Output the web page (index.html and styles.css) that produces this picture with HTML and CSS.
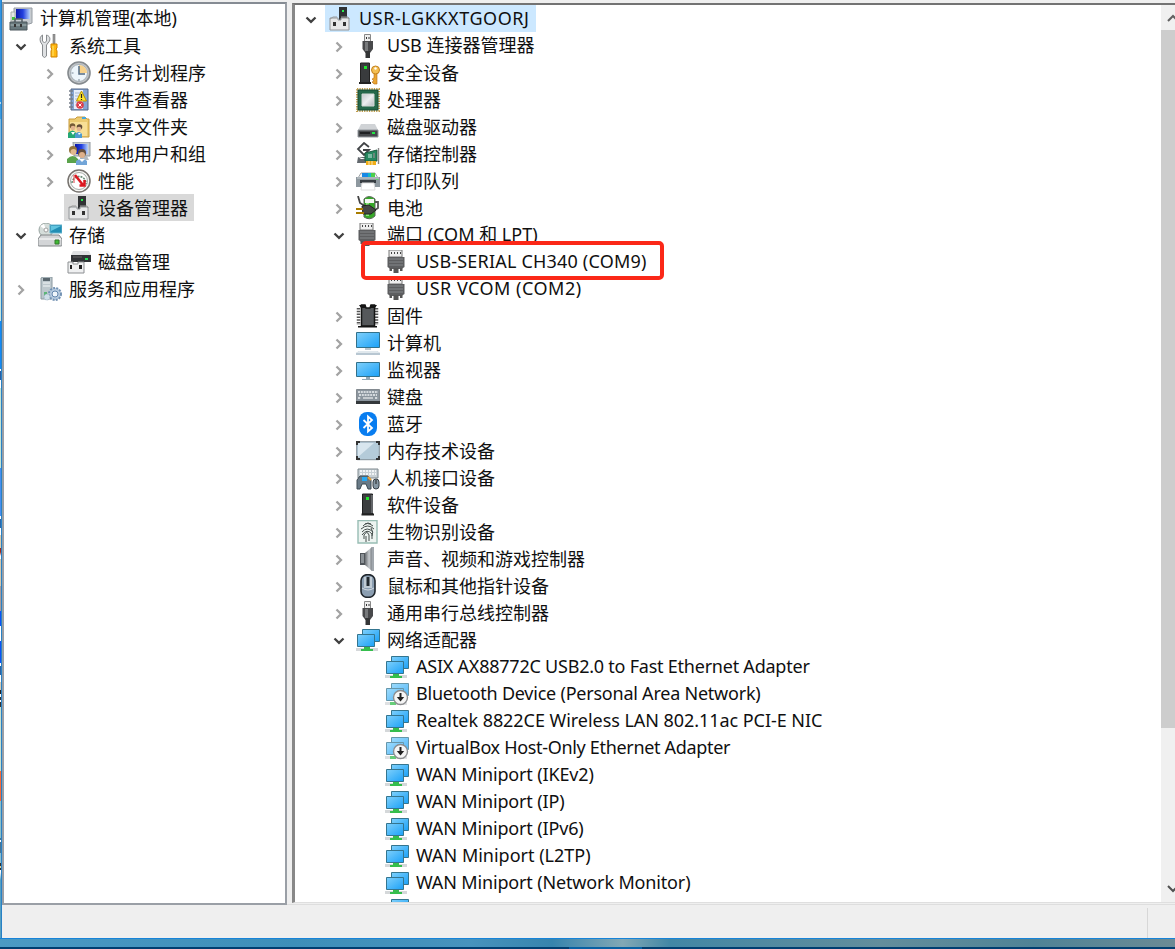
FILE: index.html
```
<!DOCTYPE html>
<html lang="zh-CN">
<head>
    <meta charset="UTF-8">
    <meta name="viewport" content="width=device-width, initial-scale=1.0">
    <title>计算机管理</title>
    <link rel="stylesheet" href="styles.css">
</head>
<body>
    <svg class="sprites" width="0" height="0">
        <defs>
            <linearGradient id="screen" x1="0" y1="0" x2="1" y2="1"><stop offset="0" stop-color="#7fd0fb"/><stop offset="1" stop-color="#1ba1f8"/></linearGradient>
            <linearGradient id="navy" x1="0" y1="0" x2="1" y2="0"><stop offset="0" stop-color="#0a17a8"/><stop offset=".5" stop-color="#2340e0"/><stop offset="1" stop-color="#b8d4fa"/></linearGradient>
            <linearGradient id="metal" x1="0" y1="0" x2="1" y2="1"><stop offset="0" stop-color="#c3c8cb"/><stop offset=".5" stop-color="#eceeef"/><stop offset="1" stop-color="#b2b9bd"/></linearGradient>
            <linearGradient id="steel" x1="0" y1="0" x2="1" y2="0"><stop offset="0" stop-color="#686c70"/><stop offset=".6" stop-color="#c8ccd0"/><stop offset="1" stop-color="#70757a"/></linearGradient>
        </defs>
        <symbol id="management" viewBox="0 0 24 24">
            <path d="M5 1h18v15l-3 1H5z" fill="#c6cbd0" stroke="#969ca3"/><path d="M7 2h14v10H7z" fill="url(#navy)"/>
            <path d="M2 5h4v9H2z" fill="#e4e8e5" stroke="#a7b0aa"/><path d="M3 10h3v3H3z" fill="#3cc63c"/>
            <path d="M6 15v-3h7v3" fill="none" stroke="#59636a" stroke-width="1.6"/><path d="M1 15h17v8H1z" fill="#68787d" stroke="#4b575c"/><path d="M1.5 18h16" stroke="#a9b8bb"/><path d="M5 17h2v3H5zm6 0h2v3h-2z" fill="#333"/>
        </symbol>
        <symbol id="tools" viewBox="0 0 24 24">
            <path d="M4.500 1v6l2 2 2-2V1c3 1 4 3 3 6l-3 4v11q-2 3-4 0V11L2.500 8Q1 3 4.500 1z" fill="#dfe1e3" stroke="#888b8e"/>
            <path d="M15 0h2v10h-2z" fill="#999" stroke="#777" stroke-width=".6"/><path d="M13 10h6v4l-1 1 1 2v6h-6v-6l1-2-1-1z" fill="#ffb812" stroke="#d18300"/><path d="M15 12v10" stroke="#ffe66f"/>
        </symbol>
        <symbol id="clock" viewBox="0 0 24 24">
            <circle cx="12" cy="12" r="11" fill="#c1c4c7" stroke="#858a8e" stroke-width="1.6"/><circle cx="12" cy="12" r="8.5" fill="#edf5fb" stroke="#a6afb6"/><path d="M12 4a8 8 0 0 1 8 8h-8z" fill="#f7d18b"/><path d="M12 5v8h6" fill="none" stroke="#536b84" stroke-width="1.5"/><path d="M4.5 12h2m5.5 6v2" stroke="#788796"/>
        </symbol>
        <symbol id="events" viewBox="0 0 24 24">
            <path d="M4 1h17v21H4z" fill="#86a5d3" stroke="#536786"/><path d="M7 2h9v19H7z" fill="#e7eefb"/><path d="M8 5h6m-6 3h5m-5 3h5m-5 3h5m-5 3h5" stroke="#a8b8d1"/><path d="M2 3h4M2 7h4m-4 4h4m-4 4h4m-4 4h4" stroke="#777f8b" stroke-width="1.5"/>
            <path d="M14.5 3l5 10h-10z" fill="#ffe631" stroke="#bb9500"/><path d="M14.5 6v4m0 1v1" stroke="#222" stroke-width="1.2"/><circle cx="13" cy="17" r="3.8" fill="#dc3d48"/><path d="M11.5 15.5l3 3m0-3l-3 3" stroke="#fff"/>
        </symbol>
        <symbol id="shared" viewBox="0 0 24 24">
            <path d="M2 4h6l2-2h8l2 2h2v18H2z" fill="#eccb71" stroke="#c99b3c"/><path d="M3 7h17v14H3z" fill="#f8df96"/><path d="M15 2h4v2h-4z" fill="#47a6dd"/>
            <circle cx="5.5" cy="11" r="2.8" fill="#765b36"/><circle cx="12.5" cy="12" r="2.8" fill="#604b38"/><circle cx="6" cy="13" r="2.3" fill="#e3b590"/><circle cx="12" cy="14" r="2.3" fill="#e3b590"/><path d="M1 23v-5q5-5 8 0v5z" fill="#24a875"/><path d="M8 23v-4q4-4 7 0v4z" fill="#4f9bd0"/><path d="M4 17l2 3 2-3m3 1l1 2 2-2" fill="#fff"/>
        </symbol>
        <symbol id="users" viewBox="0 0 24 24">
            <path d="M6 0h17v14H7z" fill="#c6cbd0" stroke="#9299a0"/><path d="M8 2h13v10H8z" fill="url(#navy)"/><path d="M13 14h7l2 4h-9z" fill="#b4bac0"/>
            <circle cx="6" cy="8" r="4" fill="#92733c"/><circle cx="6.5" cy="10" r="3" fill="#e2b98d"/><circle cx="15" cy="11" r="4" fill="#68503c"/><circle cx="15" cy="13" r="3" fill="#dfb08a"/><path d="M0 21v-4q6-6 11 0v4z" fill="#5ba34b"/><path d="M9 23v-4q6-5 11 0v4z" fill="#72a5d8"/><path d="M12 17l3 3 3-3" fill="#fff"/>
        </symbol>
        <symbol id="performance" viewBox="0 0 24 24">
            <circle cx="12" cy="12" r="11" fill="#f7f7f4" stroke="#77736f" stroke-width="1.5"/><circle cx="12" cy="12" r="8.5" fill="#fff" stroke="#a5aaa7"/><path d="M5 14a7 7 0 1 1 14 1" fill="none" stroke="#688d76" stroke-width="1.6" stroke-dasharray="2 1"/><path d="M8 6l8 10m1.500-5v5.500h-5" fill="none" stroke="#dc1720" stroke-width="2.5"/><path d="M7 6v8" stroke="#e04448"/>
        </symbol>
        <symbol id="device" viewBox="0 0 24 24">
            <path d="M11 0h8v13h-8z" fill="#303234"/><path d="M14 3h2v2h-2z" fill="#2aec50"/><path d="M2 11h8v2h3v-2h8v12H2z" fill="#e7e8e9" stroke="#94979a"/><path d="M2 12l3-2h4m4 0h7l1 2" fill="none" stroke="#999"/><path d="M5 15h3v4H5zm10 0h3v4h-3z" fill="#333"/>
        </symbol>
        <symbol id="storage" viewBox="0 0 24 24">
            <circle cx="8" cy="7" r="7" fill="#d5ddda" stroke="#98a4a1"/><path d="M8 7L2 3l4-2z" fill="#fff"/><circle cx="8" cy="7" r="2" fill="#fff" stroke="#a0a0a0"/><path d="M12 2h12v8H12z" fill="#218eb4" stroke="#66b3cd"/><path d="M13 3h10l-10 5z" fill="#61c4df"/>
            <path d="M3 12h18l3 4v6q0 1-1 1H1q-1 0-1-1v-6z" fill="#d3d5d7" stroke="#828688"/><path d="M1 16h22" stroke="#fff"/><path d="M17 17h4v4h-4z" fill="#40bb35" stroke="#34782c"/>
        </symbol>
        <symbol id="disk" viewBox="0 0 24 24">
            <path d="M6 1h16l2 4H4z" fill="#dfe1e3"/><path d="M4 5h20v7H4z" fill="#303336"/><path d="M6 7h9" stroke="#666"/><path d="M18 8h3v2h-3z" fill="#20dc54"/><path d="M1 12h5v2h5v-2h6v11H1z" fill="#eff0f1" stroke="#8c8f92"/><path d="M3 15h2v4H3zm9 0h3v4h-3z" fill="#222"/>
        </symbol>
        <symbol id="services" viewBox="0 0 24 24">
            <path d="M3 1l2-1h9v22H3z" fill="#bdc8cd" stroke="#8a989f"/><path d="M5 1h7v3H5z" fill="#5b6870"/><path d="M5 6h7M5 9h7" stroke="#f3f7f8"/><path d="M6 15h3v5H6z" fill="#5bb676"/><circle cx="17" cy="17" r="6" fill="#b7cbe0" stroke="#7392b3" stroke-width="2" stroke-dasharray="2 1.2"/><circle cx="17" cy="17" r="3" fill="#eef5fb" stroke="#6386ad"/><circle cx="9" cy="20" r="3" fill="#cfdee8" stroke="#91aabd" stroke-dasharray="1 1"/>
        </symbol>
        <symbol id="usb" viewBox="0 0 24 24">
            <path d="M8.5.5h6v8h-6z" fill="#eee" stroke="#888"/><path d="M10 3h1v2h-1zm2.5 0h1v2h-1z" fill="#333"/><path d="M6.500 7h10.500v8l-3 4h-4.500l-3-4z" fill="#48494b"/><path d="M9 8h3v9H9z" fill="#77797b"/><path d="M9.5 17h4.500v7h-4.500z" fill="#343536"/>
        </symbol>
        <symbol id="software" viewBox="0 0 24 24"><path d="M6.5 1h10v20h-10z" fill="#3c3e40" stroke="#1e1f20"/><path d="M15 2h2v18h-2z" fill="#626568"/><path d="M10 4h3v3h-3z" fill="#20e52d"/><path d="M5.5 21.5h12.5" stroke="#222" stroke-width="2"/></symbol>
        <symbol id="security" viewBox="0 0 24 24"><path d="M4.5 2h9v20h-9z" fill="#393b3d" stroke="#222"/><path d="M8 5h3v3H8z" fill="#20e52d"/><path d="M3 22h12" stroke="#222" stroke-width="2"/><path d="M18 12h3v11h-3l-2-2 2-1-2-2 2-1z" fill="#e9a532" stroke="#b96d13" stroke-width=".6"/><circle cx="19.5" cy="9" r="4" fill="#f3bf52" stroke="#c38121"/><circle cx="19.5" cy="7.5" r="1.2" fill="#fff"/></symbol>
        <symbol id="processor" viewBox="0 0 24 24"><rect x="1" y="1" width="22" height="22" fill="none" stroke="#bf9d4e" stroke-width="2" stroke-dasharray="1.3 1.1"/><path d="M2 2h20v20H2z" fill="#25684a" stroke="#174b34"/><path d="M6 6h12v12H6z" fill="url(#metal)" stroke="#d4d9d5"/></symbol>
        <symbol id="drive" viewBox="0 0 24 24"><path d="M5 9h14l3 6H2z" fill="#d0d3d6"/><path d="M2 15h20v7H2z" fill="#44474a" stroke="#94999e"/><path d="M4 18h10" stroke="#1f2123" stroke-width="2"/><path d="M16 17h3v2h-3z" fill="#21e845"/></symbol>
        <symbol id="controller" viewBox="0 0 24 24"><path d="M13 5L8 1 2 7l6 6 5-5H7" fill="#fff" stroke="#414447" stroke-width="1.8"/><path d="M2 15h8v6H1zm0 0l3 2h6" fill="#62686d"/><path d="M9 11l12-3v11H9z" fill="#25875f" stroke="#1c5c40"/><path d="M12 12h4v4h-4z" fill="#78bba2"/><path d="M18 11v5M22.5 6v16" stroke="#888" stroke-width="1.4"/><path d="M10 19h10v4H10z" fill="#f0ad16"/><path d="M13 19v4m3-4v4" stroke="#fff" stroke-width=".7"/></symbol>
        <symbol id="printer" viewBox="0 0 24 24"><path d="M5 4h14l3 5H2z" fill="#f5f5f5" stroke="#9ba1a5"/><path d="M6 4h6v4H6z" fill="#1688e6"/><path d="M12 4h3v4h-3z" fill="#16b5c5"/><path d="M15 4h4v4h-4z" fill="#4dce4a"/><path d="M0 8h24v10H0z" fill="#8e989f"/><path d="M1 9h22" stroke="#c9d1d5"/><path d="M4 11h16v3H4z" fill="#373d42"/><path d="M6 14h12l1 7H5z" fill="#fff" stroke="#ddd"/><path d="M20 10h2v1h-2z" fill="#4fe55a"/></symbol>
        <symbol id="battery" viewBox="0 0 24 24"><path d="M18 6h4v6l-3 2" fill="none" stroke="#555" stroke-width="1.8"/><path d="M8 3q5-5 11 0v17q-5 5-11 1z" fill="#36a927" stroke="#5b665b"/><path d="M9 3h9v4H9z" fill="#f4f7f3"/><path d="M10 7h3v13h-3z" fill="#8be27b"/><path d="M2 0l2 7 5 3" fill="none" stroke="#444" stroke-width="1.8"/><path d="M6 10l7-1 7 5-5 4H7z" fill="#454744" stroke="#222"/><path d="M0 13h7M0 17h8" stroke="#a87c00" stroke-width="2"/></symbol>
        <symbol id="serial" viewBox="0 0 24 24"><path d="M4 0h13v7H4z" fill="#eee" stroke="#777"/><path d="M6 2h1v2H6zm3 0h1v2H9zm3 0h1v2h-1zm3 0h1v2h-1z" fill="#444"/><path d="M2.500 7h17v10l-3 2H5.500l-3-2z" fill="#5d5e60"/><path d="M4 9h14M4 12h14M4 15h14" stroke="#85878a"/><path d="M4.500 18h2.500v3H4.500zm10.500 0h2.500v3h-2.500zM8.500 18h5v5h-5z" fill="#555"/></symbol>
        <symbol id="firmware" viewBox="0 0 24 24"><path d="M2.500 4v17m18-17v17" stroke="#555" stroke-width="3.500" stroke-dasharray="1.500 1.300"/><path d="M5.500 1H9l1 3h4l1-3h3.500v21h-13z" fill="#55585b" stroke="#151515" stroke-width="1.500"/><path d="M3 1h6l1 3H5zm18 0h-6l-1 3h5zM2 22h19v1.500H2z" fill="#151515"/></symbol>
        <symbol id="computer" viewBox="0 0 24 24"><path d="M.5 1.5h23v15H.5z" fill="url(#screen)" stroke="#32718b"/><path d="M9 17h6v2H9z" fill="#b9c5ce"/><path d="M3 20h18l3 2v2H0v-2z" fill="#b8c7d2"/><path d="M3 20h18l3 2H0z" fill="#e0e8ed"/></symbol>
        <symbol id="monitor" viewBox="0 0 24 24"><path d="M.5 4.5h23v14H.5z" fill="url(#screen)" stroke="#32718b"/><path d="M10 19h4v2h4v1H6v-1h4z" fill="#91a8b7"/></symbol>
        <symbol id="keyboard" viewBox="0 0 24 24"><path d="M.5 4.5h23v13H.5z" fill="#8b959e" stroke="#838a90"/><path d="M2 7h20M3 10h18M2 13h3m14 0h3" stroke="#eef1f3" stroke-width="1.5" stroke-dasharray="2 .8"/><path d="M7 13h10" stroke="#fff"/><path d="M0 16h24v3H0z" fill="#34383b"/></symbol>
        <symbol id="bluetooth" viewBox="0 0 24 24"><rect x="3" width="18" height="24" rx="8" fill="#087df0"/><path d="M7.500 8l8.500 8-4 3.500v-15l4 3.500-8.500 8" fill="none" stroke="#fff" stroke-width="1.8"/></symbol>
        <symbol id="memory" viewBox="0 0 24 24"><rect x=".7" y="2.7" width="22.6" height="18" rx="1" fill="#b4cbd9" stroke="#828f98"/><path d="M2 4h16L2 18z" fill="#d8e6ef"/><path d="M1 6V3h3m16 0h3v3M1 17v3h3m16 0h3v-3" fill="none" stroke="#333" stroke-width="2"/></symbol>
        <symbol id="hid" viewBox="0 0 24 24"><path d="M2 3h20v9H2z" fill="#c8d0d5" stroke="#7e898f"/><path d="M4 5h16M4 8h16" stroke="#fff" stroke-width="1.5" stroke-dasharray="2 1"/><path d="M1 23V14l3-4h8l3 4v9h-3l-2-5H6l-2 5z" fill="#697a87" stroke="#3d4a52"/><path d="M6 11h5v4H6z" fill="#28a9f3"/><path d="M12 11l3 3" stroke="#e7a13a" stroke-width="2"/><rect x="17" y="13" width="6" height="10" rx="3" fill="#8697a3" stroke="#374047"/><path d="M20 14v4" stroke="#222"/></symbol>
        <symbol id="biometric" viewBox="0 0 24 24"><path d="M2 .5h19v22.5H2z" fill="#edf4f1" stroke="#98bdb4" stroke-width="1.4"/><path d="M7 6q4-5 10 0M5 9q7-6 13 0M6 12q5-6 11 0M6 15q5-7 10-1v5M8 19v-4q3-5 5 0v6m-3-5v6M15 8q3 4 1 8M9 4q3-2 6 0" fill="none" stroke="#454e4c"/></symbol>
        <symbol id="speaker" viewBox="0 0 24 24"><path d="M4 6h5v12H4z" fill="#50555a"/><path d="M5 7h3v9H5z" fill="#8b9196"/><path d="M9 6l7-6v24l-7-6z" fill="url(#steel)"/><path d="M15.500 0h2.500v24h-2.500z" fill="#a1a7ad"/></symbol>
        <symbol id="mouse" viewBox="0 0 24 24"><rect x="5" y=".7" width="14" height="22.6" rx="6" fill="#8b9eb1" stroke="#20262c" stroke-width="1.6"/><path d="M8 3h8v11H8z" fill="#c0cbd4"/><path d="M12 3v9" stroke="#232a30" stroke-width="3"/><path d="M6 14q6 4 12 0" fill="none" stroke="#d3dbe2"/></symbol>
        <symbol id="network" viewBox="0 0 24 24"><path d="M6.500 1.500h17v12h-17z" fill="url(#screen)" stroke="#34758f"/><path d="M1.500 6.500h17v12h-17z" fill="url(#screen)" stroke="#34758f"/><path d="M0 20h22v3H0z" fill="#d5d8da"/><path d="M8 19h6v2h3v2H5v-2h3z" fill="#35be4d"/></symbol>
        <symbol id="network-down" viewBox="0 0 24 24"><g opacity=".75"><path d="M6.500 1.500h17v12h-17z" fill="url(#screen)" stroke="#34758f"/><path d="M1.500 6.500h17v12h-17z" fill="url(#screen)" stroke="#34758f"/><path d="M0 20h22v3H0z" fill="#d5d8da"/><path d="M5 20h6v3H5z" fill="#35be4d"/></g><circle cx="15.5" cy="15.5" r="7" fill="#f5f5f5" stroke="#8b8d8f" stroke-width="1.4"/><path d="M15.5 11v6" stroke="#222" stroke-width="2"/><path d="M11.8 15h7.4l-3.7 4.5z" fill="#222"/></symbol>
        <symbol id="arrow" viewBox="0 0 20 20"><path d="M7.500 6.500l4.500 4.500-4.500 4.500" fill="none" stroke="#a3a3a3" stroke-width="2.300"/></symbol>
        <symbol id="arrow-open" viewBox="0 0 20 20"><path d="M5.500 8.500l4.500 4.300 4.500-4.300" fill="none" stroke="#404040" stroke-width="2.300"/></symbol>
    </svg>

    <div class="window">
        <div class="desktop-edge"></div>
        <main class="main">
            <div class="panes">
                <div class="pane console-tree" id="console-tree"></div>
                <div class="pane device-pane">
                    <div class="device-tree" id="device-tree"></div>
                    <div class="scrollbar">
                        <div class="scroll-button"><svg viewBox="0 0 14 20"><path d="M7 14l5-5 5 5" fill="none" stroke="#606060" stroke-width="2"/></svg></div>
                        <div class="scroll-thumb"></div>
                        <div class="scroll-button bottom"><svg viewBox="0 0 14 20"><path d="M7 7l5 5 5-5" fill="none" stroke="#505050" stroke-width="2"/></svg></div>
                    </div>
                </div>
            </div>
            <div class="statusbar"><div class="status-cell"></div></div>
        </main>
    </div>
    <div class="desktop"></div>
    <div class="taskbar"><div class="task"></div></div>

    <script>
        // level, icon, label, state, extra class
        const consoleItems = [
            [0, 'management', '计算机管理(本地)', '', 'root'],
            [0, 'tools', '系统工具', 'open'],
            [1, 'clock', '任务计划程序', 'closed'],
            [1, 'events', '事件查看器', 'closed'],
            [1, 'shared', '共享文件夹', 'closed'],
            [1, 'users', '本地用户和组', 'closed'],
            [1, 'performance', '性能', 'closed'],
            [1, 'device', '设备管理器', '', 'selected'],
            [0, 'storage', '存储', 'open'],
            [1, 'disk', '磁盘管理', ''],
            [0, 'services', '服务和应用程序', 'closed']
        ];

        const deviceItems = [
            [0, 'device', 'USR-LGKKXTGOORJ', 'open', 'selected host'],
            [1, 'usb', 'USB 连接器管理器', 'closed'],
            [1, 'security', '安全设备', 'closed'],
            [1, 'processor', '处理器', 'closed'],
            [1, 'drive', '磁盘驱动器', 'closed'],
            [1, 'controller', '存储控制器', 'closed'],
            [1, 'printer', '打印队列', 'closed'],
            [1, 'battery', '电池', 'closed'],
            [1, 'serial', '端口 (COM 和 LPT)', 'open'],
            [2, 'serial', 'USB-SERIAL CH340 (COM9)', '', 'port marked'],
            [2, 'serial', 'USR VCOM (COM2)', '', 'port vcom'],
            [1, 'firmware', '固件', 'closed'],
            [1, 'computer', '计算机', 'closed'],
            [1, 'monitor', '监视器', 'closed'],
            [1, 'keyboard', '键盘', 'closed'],
            [1, 'bluetooth', '蓝牙', 'closed'],
            [1, 'memory', '内存技术设备', 'closed'],
            [1, 'hid', '人机接口设备', 'closed'],
            [1, 'software', '软件设备', 'closed'],
            [1, 'biometric', '生物识别设备', 'closed'],
            [1, 'speaker', '声音、视频和游戏控制器', 'closed'],
            [1, 'mouse', '鼠标和其他指针设备', 'closed'],
            [1, 'usb', '通用串行总线控制器', 'closed'],
            [1, 'network', '网络适配器', 'open'],
            [2, 'network', 'ASIX AX88772C USB2.0 to Fast Ethernet Adapter', '', 'adapter'],
            [2, 'network-down', 'Bluetooth Device (Personal Area Network)', '', 'adapter'],
            [2, 'network', 'Realtek 8822CE Wireless LAN 802.11ac PCI-E NIC', '', 'wireless'],
            [2, 'network-down', 'VirtualBox Host-Only Ethernet Adapter', '', 'adapter virtual'],
            [2, 'network', 'WAN Miniport (IKEv2)', '', 'miniport'],
            [2, 'network', 'WAN Miniport (IP)', '', 'miniport'],
            [2, 'network', 'WAN Miniport (IPv6)', '', 'miniport'],
            [2, 'network', 'WAN Miniport (L2TP)', ''],
            [2, 'network', 'WAN Miniport (Network Monitor)', '', 'miniport'],
            [2, 'network', '', '']
        ];

        function renderTree(id, items) {
            document.getElementById(id).innerHTML = items.map(([level, icon, label, state, extra = '']) => `
                <div class="row level-${level} ${extra}">
                    <span class="chevron">${state ? `<svg><use href="#${state === 'open' ? 'arrow-open' : 'arrow'}"/></svg>` : ''}</span>
                    <span class="item"><svg class="icon"><use href="#${icon}"/></svg><span class="label ${/[(A-Z]/.test(label) ? '' : 'han'}">${label}</span></span>
                </div>
            `).join('');
        }

        renderTree('console-tree', consoleItems);
        renderTree('device-tree', deviceItems);
    </script>
</body>
</html>
```
FILE: styles.css
```
*, *::after {
    box-sizing: border-box;
}
body {
    margin: 0;
    height: 949px;
    overflow: hidden;
    display: flex;
    flex-direction: column;
    background: #efefef;
    color: #101010;
    font-family: "Noto Sans", "Noto Sans CJK SC", sans-serif;
    font-size: 18px;
}
.sprites {
    position: absolute;
}
.window {
    height: 939px;
    display: flex;
    border-bottom: 1px solid #1683d9;
}
.desktop-edge {
    width: 2px;
    border-right: 1px solid #2781c6;
    background: linear-gradient(#3294e4 0 102px, #b4dcf2 102px 104px, #3c9be0 104px 119px, #7dbbe3 119px 200px, #c5e4de 200px 321px, #1488f5 321px 369px, #fff 369px 371px, #285ea4 371px 380px, #fff 380px 388px, #c3e3d4 388px 468px, #468ff1 468px 516px, #fff 516px 519px, #2868ad 519px 528px, #fff 528px 535px, #d9ccb0 535px 548px, #a02718 548px 552px, #fff 556px 559px, #d5c8af 559px 586px, #a89c9d 586px 611px, #0b51f6 611px 626px, #fff 626px 641px, #0b51f6 641px 663px, #fff 663px 666px, #2a62a3 666px 675px, #fff 675px 682px, #d6cbb6 682px 690px, #222 690px 694px, #fff 694px 697px, #333 697px 700px, #fff 700px 702px, #333 702px 707px, #c8dfcf 707px 771px, #fa6a38 771px 801px, #8cc0ca 801px 838px, #477596 838px 840px, #fff 840px 842px, #477596 842px 853px, #8bc0d2 853px 863px, #333 863px 866px, #ded4a0 866px 868px, #333 868px 870px, #fff 870px 872px, #56a0c2 880px);
}
.main {
    flex: 1;
    min-width: 0;
}
.panes {
    height: 905px;
    padding-top: 2px;
    display: flex;
    gap: 5px;
    border-bottom: 1px solid #dedede;
}
.pane {
    background: #fff;
    overflow: hidden;
}
.console-tree {
    width: 285px;
    height: 903px;
    border: 2px solid #9a9fa6;
    border-top-color: #858b93;
    padding: 1px 0 0 7px;
}
.device-pane {
    flex: 1;
    height: 900px;
    margin-top: 1px;
    border: solid #737373;
    border-width: 2px 0 0 3px;
    border-left-color: #888;
    border-bottom: 1px solid #dfdfdf;
    display: flex;
}
.device-tree {
    flex: 1;
    min-width: 0;
    padding-left: 6px;
}
.row {
    height: 27px;
    display: flex;
    align-items: center;
    white-space: nowrap;
    position: relative;
}
.level-1 {
    padding-left: 28px;
}
.console-tree .level-1 {
    padding-left: 29px;
}
.level-2 {
    padding-left: 57px;
}
.chevron {
    width: 20px;
    height: 20px;
    flex: none;
    margin-right: 4px;
}
.root .chevron {
    display: none;
}
.root {
    margin-left: -5px;
}
.chevron svg {
    width: 20px;
    height: 20px;
    display: block;
}
.item {
    height: 27px;
    padding: 0 6px 0 3px;
    display: flex;
    align-items: center;
    gap: 7px;
}
.icon {
    width: 24px;
    height: 24px;
    margin-top: 1px;
    flex: none;
}
.label {
    line-height: 27px;
}
.han {
    padding-top: 1px;
}
.selected .item {
    background: #d9d9d9;
}
.host .item {
    background: #cce8ff;
    letter-spacing: .57px;
}
.port {
    letter-spacing: .19px;
}
.vcom {
    letter-spacing: .5px;
}
.adapter {
    letter-spacing: -.23px;
}
.virtual {
    letter-spacing: -.32px;
}
.wireless {
    letter-spacing: -.05px;
}
.miniport {
    letter-spacing: -.15px;
}
.marked::after {
    content: "";
    position: absolute;
    left: 60px;
    top: -7px;
    width: 303px;
    height: 39px;
    border: 4px solid #fb2818;
    border-radius: 5px;
    z-index: 1;
}
.scrollbar {
    width: 14px;
    background: #f0f0f0;
    display: flex;
    flex-direction: column;
}
.scroll-button {
    height: 25px;
    padding-top: 2px;
}
.scroll-button svg {
    width: 14px;
    height: 20px;
    display: block;
}
.scroll-thumb {
    height: 698px;
    background: #cdcdcd;
}
.bottom {
    margin-top: auto;
}
.statusbar {
    height: 33px;
    padding-top: 3px;
    display: flex;
}
.status-cell {
    width: 1146px;
    border-right: 1px solid #d7d7d7;
}
.desktop {
    height: 8px;
    background: linear-gradient(90deg, #4b9ac4, #3d8fb9 25%, #4793bd 40%, #3784ad 47%, #82a8b5 53%, #4287a5 57%, #638e9c 75%, #4f8396 88%, #6b8b95);
}
.taskbar {
    height: 2px;
    padding-left: 569px;
    background: #003e70;
}
.task {
    width: 73px;
    height: 2px;
    background: #0860a2;
}
```
